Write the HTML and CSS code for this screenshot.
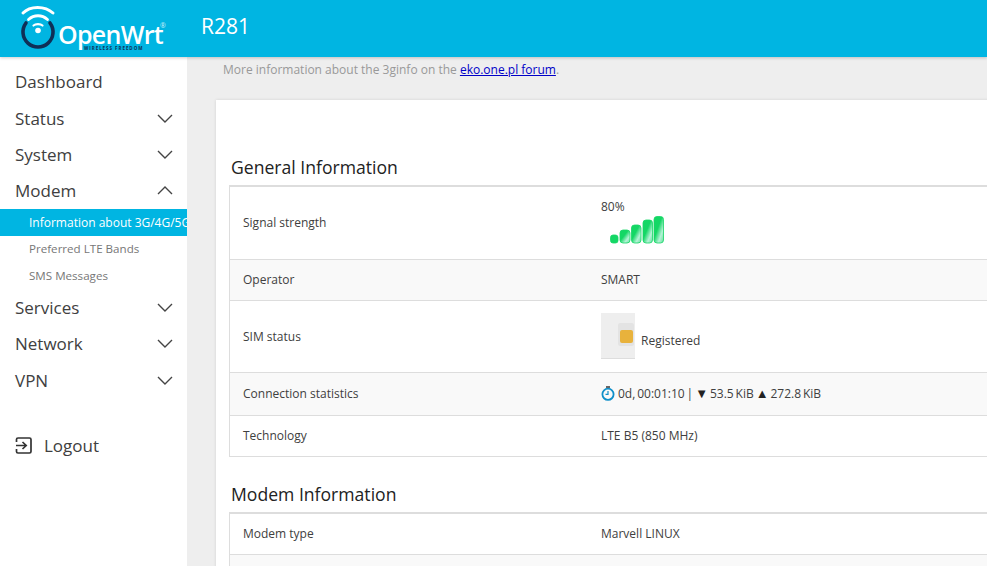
FILE: index.html
```html
<!DOCTYPE html>
<html lang="en">
<head>
  <meta charset="UTF-8" />
  <meta name="viewport" content="width=device-width, initial-scale=1.0"/>
  <title>R281 - Information about 3G/4G/5G</title>
  <link rel="stylesheet" href="styles.css">
</head>
<body>
  <header class="topbar">
    <a class="logo" href="#">
      <svg class="logo-mark" width="36" height="44" viewBox="0 0 36 44">
        <path d="M3 8 C10 0.5 25 0.5 33 8" fill="none" stroke="#fff" stroke-width="3" stroke-linecap="round"/>
        <path d="M8.5 14.5 C14 9.5 22 9.5 27.5 14.5" fill="none" stroke="#fff" stroke-width="2.8" stroke-linecap="round"/>
        <path d="M6 18 A15 15 0 1 0 30 18" fill="none" stroke="#0f2f57" stroke-width="3.6" stroke-linecap="round"/>
        <path d="M13.5 20.5 C15.5 18.8 20.5 18.8 22.5 20.5" fill="none" stroke="#fff" stroke-width="2.2" stroke-linecap="round"/>
        <circle cx="18" cy="25.5" r="2.8" fill="#fff"/>
      </svg>
      <span class="logo-text">OpenWrt</span>
      <span class="logo-reg">®</span>
      <span class="logo-tag">WIRELESS FREEDOM</span>
    </a>
    <span class="hostname">R281</span>
  </header>

  <div class="layout">
    <aside class="sidebar">
      <ul class="menu">
        <li class="menu-item">Dashboard</li>
        <li class="menu-item">Status
          <svg class="chevron" width="16" height="9" viewBox="0 0 16 9"><path d="M1 1 L8 8 L15 1"/></svg>
        </li>
        <li class="menu-item">System
          <svg class="chevron" width="16" height="9" viewBox="0 0 16 9"><path d="M1 1 L8 8 L15 1"/></svg>
        </li>
        <li class="menu-item">Modem
          <svg class="chevron" width="16" height="9" viewBox="0 0 16 9"><path d="M1 8 L8 1 L15 8"/></svg>
        </li>
        <li class="submenu-item active">Information about 3G/4G/5G Modem</li>
        <li class="submenu-item">Preferred LTE Bands</li>
        <li class="submenu-item">SMS Messages</li>
        <li class="menu-item">Services
          <svg class="chevron" width="16" height="9" viewBox="0 0 16 9"><path d="M1 1 L8 8 L15 1"/></svg>
        </li>
        <li class="menu-item">Network
          <svg class="chevron" width="16" height="9" viewBox="0 0 16 9"><path d="M1 1 L8 8 L15 1"/></svg>
        </li>
        <li class="menu-item">VPN
          <svg class="chevron" width="16" height="9" viewBox="0 0 16 9"><path d="M1 1 L8 8 L15 1"/></svg>
        </li>
      </ul>
      <a class="logout" href="#">
        <svg width="17" height="17" viewBox="0 0 17 17" fill="none" stroke="#333" stroke-width="1.7">
          <path d="M1.5 5 V2.5 Q1.5 1 3 1 H14.5 Q16 1 16 2.5 V14.5 Q16 16 14.5 16 H3 Q1.5 16 1.5 14.5 V12"/>
          <path d="M1 8.5 H11 M7.5 5 L11.2 8.5 L7.5 12"/>
        </svg>
        Logout
      </a>
    </aside>

    <main class="content">
      <p class="intro">More information about the 3ginfo on the <a href="#">eko.one.pl forum</a>.</p>

      <section class="card">
        <h3 class="section-title">General Information</h3>
        <table class="info-table">
          <tr class="row-signal">
            <td class="label">Signal strength</td>
            <td>
              <div class="signal-value">80%</div>
              <svg class="signal-icon" width="54" height="28" viewBox="0 0 54 28">
                <defs>
                  <linearGradient id="barFill" x1="0" y1="0" x2="1" y2="1">
                    <stop offset="0.42" stop-color="#14d765"/>
                    <stop offset="0.72" stop-color="#b4f2d6"/>
                    <stop offset="1" stop-color="#62e09c"/>
                  </linearGradient>
                </defs>
                <g stroke="#14d765" stroke-width="0.8">
                  <rect x="0.5" y="19" width="7.5" height="8" rx="2.5" fill="#14d765"/>
                  <rect x="10" y="14" width="10" height="13" rx="3" fill="url(#barFill)"/>
                  <rect x="21.5" y="9" width="9.5" height="18" rx="3" fill="url(#barFill)"/>
                  <rect x="33" y="4" width="9.5" height="23" rx="3" fill="url(#barFill)"/>
                  <rect x="44" y="0.5" width="9.5" height="26.5" rx="3" fill="url(#barFill)"/>
                </g>
              </svg>
            </td>
          </tr>
          <tr class="row-plain">
            <td class="label">Operator</td>
            <td>SMART</td>
          </tr>
          <tr class="row-sim">
            <td class="label">SIM status</td>
            <td>
              <div class="sim-cell">
                <div class="sim-icon"><div class="sim-card"><div class="sim-chip"></div></div></div>
                <span class="sim-text">Registered</span>
              </div>
            </td>
          </tr>
          <tr class="row-conn">
            <td class="label">Connection statistics</td>
            <td>
              <div class="conn-cell">
                <svg width="14" height="15" viewBox="0 0 14 15" fill="none">
                  <circle cx="7" cy="8.3" r="5.6" stroke="#0f8fc9" stroke-width="1.8"/>
                  <path d="M5 1 H9" stroke="#444" stroke-width="1.6"/>
                  <path d="M7 5 V8.3 H4.5" stroke="#0f8fc9" stroke-width="1.2"/>
                </svg>
                <span class="conn-text">0d, 00:01:10 | <span class="arrow">▼</span> 53.5 KiB <span class="arrow">▲</span> 272.8 KiB</span>
              </div>
            </td>
          </tr>
          <tr class="row-plain">
            <td class="label">Technology</td>
            <td>LTE B5 (850 MHz)</td>
          </tr>
        </table>

        <h3 class="section-title second">Modem Information</h3>
        <table class="info-table">
          <tr class="row-plain">
            <td class="label">Modem type</td>
            <td>Marvell LINUX</td>
          </tr>
          <tr class="row-plain">
            <td class="label"></td>
            <td></td>
          </tr>
        </table>
      </section>
    </main>
  </div>
</body>
</html>
```

FILE: styles.css
```css
/* Base Styles */
html, body {
  height: 100%;
}

body {
  font-family: 'Open Sans', 'Noto Sans', sans-serif;
  background-color: #eeeeee;
  color: #404040;
  margin: 0;
  padding: 0;
  overflow: hidden;
}

/* Top bar */
.topbar {
  position: relative;
  z-index: 2;
  height: 57px;
  background-color: #00b5e2;
  display: flex;
  align-items: center;
  box-shadow: 0 1px 3px rgba(0, 0, 0, 0.2);
}

.logo {
  position: relative;
  width: 201px;
  height: 57px;
  flex-shrink: 0;
  color: #fff;
  text-decoration: none;
}

.logo-mark {
  position: absolute;
  left: 20px;
  top: 5px;
}

.logo-text {
  position: absolute;
  left: 58px;
  top: 24px;
  font-size: 25px;
  line-height: 20px;
  font-weight: 600;
  letter-spacing: -0.7px;
}

.logo-reg {
  position: absolute;
  top: 21px;
  left: 160px;
  font-size: 7px;
  line-height: 10px;
  color: #cdeefa;
}

.logo-tag {
  position: absolute;
  left: 84px;
  top: 45px;
  font-size: 4.5px;
  line-height: 6px;
  font-weight: 700;
  letter-spacing: 0.95px;
  color: #0f2f57;
  white-space: nowrap;
}

.hostname {
  color: #fff;
  font-size: 21px;
  font-weight: 500;
  margin-top: -5px;
}

/* Layout */
.layout {
  display: flex;
  height: 509px;
}

.sidebar {
  width: 187px;
  flex-shrink: 0;
  background-color: #fff;
  overflow: hidden;
}

.menu {
  list-style: none;
  margin: 0;
  padding: 6.5px 0 0;
}

.menu-item {
  display: flex;
  justify-content: space-between;
  align-items: center;
  height: 36.4px;
  padding: 0 15px;
  font-size: 17px;
  color: #404040;
}

.chevron {
  margin-right: -1px;
  fill: none;
  stroke: #444;
  stroke-width: 1.4;
}

.submenu-item {
  height: 26.5px;
  line-height: 26px;
  padding-left: 29px;
  font-size: 11.6px;
  color: #777;
  white-space: nowrap;
}

.submenu-item.active {
  height: 27px;
  line-height: 27px;
  font-size: 12px;
  background-color: #00b5e2;
  color: #fff;
}

.logout {
  display: flex;
  align-items: center;
  gap: 12px;
  margin: 36px 0 0 15px;
  font-size: 17px;
  color: #404040;
  text-decoration: none;
}

/* Content */
.content {
  flex: 1;
  min-width: 0;
  padding: 0 0 0 29px;
}

.intro {
  margin: 0;
  padding: 4px 0 0 7px;
  height: 43px;
  box-sizing: border-box;
  font-size: 12px;
  line-height: 18px;
  color: #999;
}

.intro a {
  color: #0000c8;
}

.card {
  background-color: #fff;
  width: 900px;
  padding: 54px 0 0 13px;
  box-shadow: 0 0 3px rgba(0, 0, 0, 0.12);
}

.section-title {
  margin: 0 0 4px 2px;
  font-size: 17.6px;
  line-height: 27px;
  font-weight: 400;
  color: #222;
}

.section-title.second {
  margin-top: 24px;
}

.info-table {
  width: 880px;
  border-collapse: collapse;
  table-layout: fixed;
  border: 1px solid #ddd;
  border-top-width: 2px;
  font-size: 12px;
  color: #404040;
}

.info-table td {
  padding: 0 0 2px 13px;
  border-top: 1px solid #ddd;
  vertical-align: middle;
}

.info-table td.label {
  width: 345px;
}

.info-table tr:nth-child(even) td {
  background-color: #f9f9f9;
}

.row-signal td {
  height: 70px;
}

.row-plain td {
  height: 38px;
}

.row-sim td {
  height: 69px;
}

.row-sim td.label {
  padding-bottom: 0;
}

.row-conn td {
  height: 40px;
}

.signal-value {
  line-height: 16px;
  margin-top: -2px;
}

.signal-icon {
  display: block;
  margin: 1px 0 0 9px;
}

.sim-cell {
  display: flex;
  align-items: flex-end;
  gap: 6px;
}

.sim-icon {
  width: 34px;
  height: 45px;
  background-color: #eeeeee;
  border-bottom: 1px solid #ddd;
  position: relative;
}

.sim-card {
  position: absolute;
  left: 17px;
  top: 10px;
  width: 16px;
  height: 23px;
  border-radius: 2px;
  background-color: #e3e3e3;
}

.sim-chip {
  position: absolute;
  left: 2px;
  top: 7px;
  width: 13px;
  height: 13px;
  border-radius: 2px;
  background-color: #e8b23c;
}

.sim-text {
  margin-bottom: 10px;
}

.conn-cell {
  display: flex;
  align-items: center;
  gap: 3px;
}

.conn-text {
  word-spacing: -1.2px;
}

.arrow {
  font-size: 13px;
  color: #222;
}
```
